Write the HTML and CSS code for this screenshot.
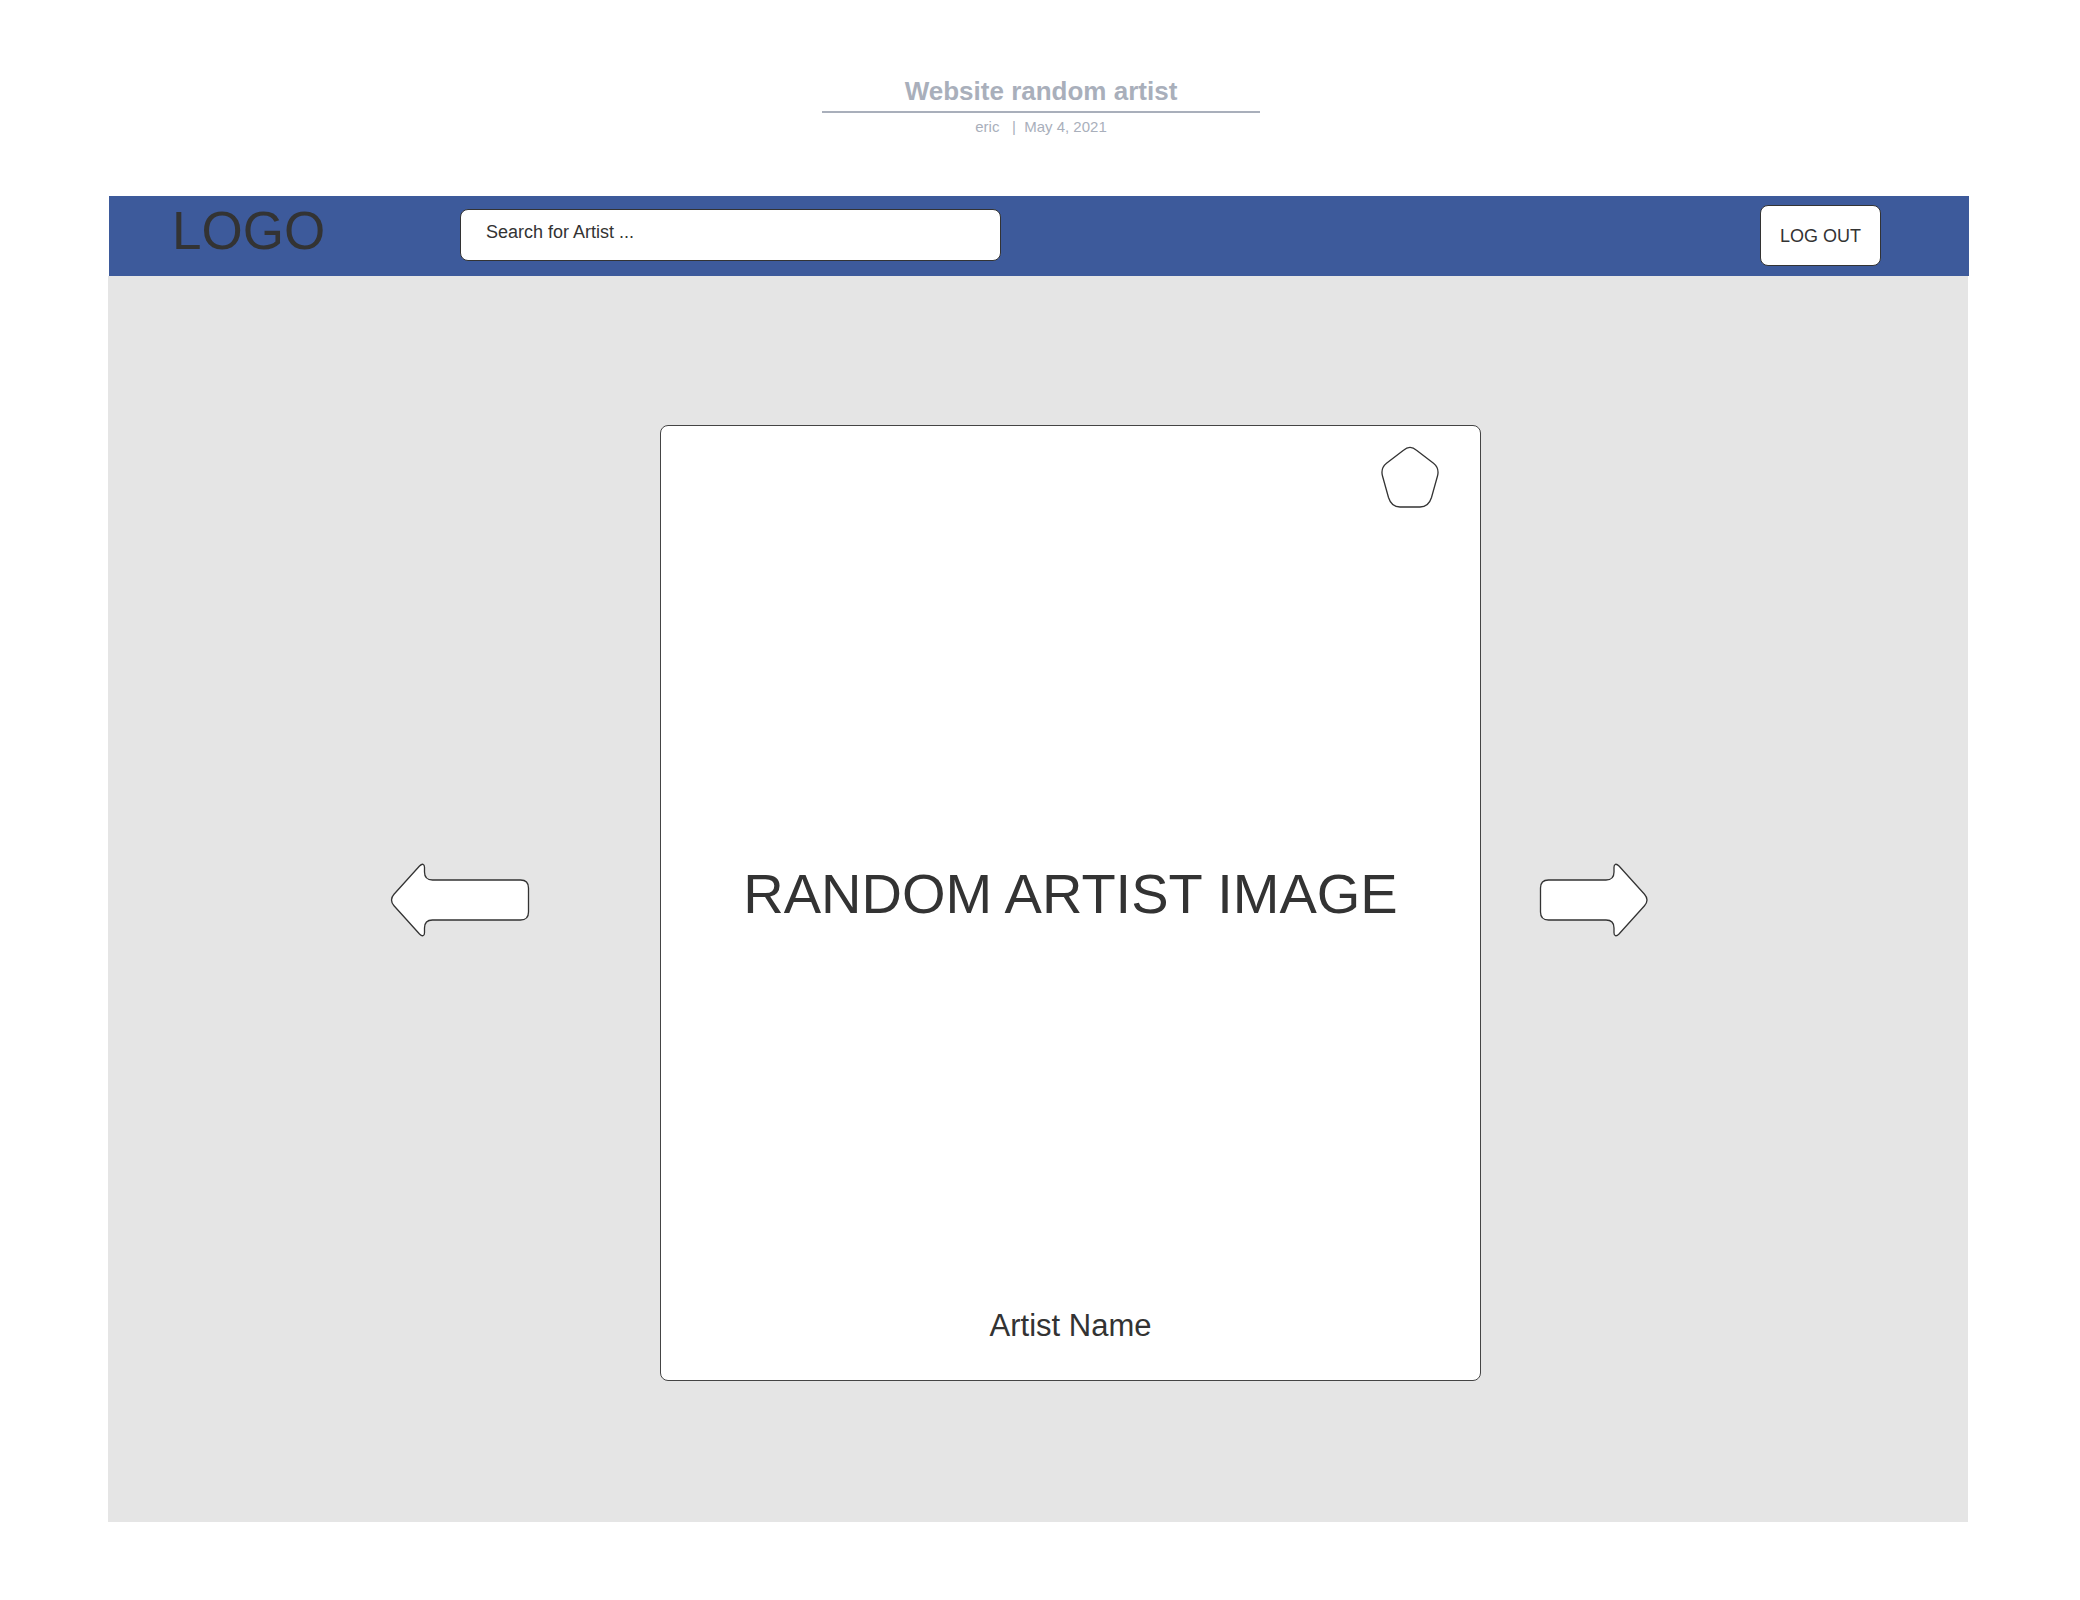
FILE: index.html
```html
<!DOCTYPE html>
<html lang="en">
<head>
  <meta charset="utf-8">
  <title>Website random artist</title>
  <link rel="stylesheet" href="styles.css">
</head>
<body>
  <header class="doc-head">
    <h1 class="doc-title">Website random artist</h1>
    <p class="doc-meta">eric &nbsp; | &nbsp;May 4, 2021</p>
  </header>

  <nav class="topbar">
    <a class="logo" href="#">LOGO</a>
    <input class="search" type="text" aria-label="Search for Artist" placeholder="Search for Artist ...">
    <button class="logout" type="button">LOG OUT</button>
  </nav>

  <main class="stage">
    <button class="arrow arrow-prev" type="button" aria-label="Previous artist">
      <svg class="shape" width="140" height="76" viewBox="0 0 140 76" stroke-width="1.3">
        <path d="M4 32.3L29.5 4C32.300 1.200 34.500 1.900 34.500 5.300V10Q34.500 18 42.500 18H130.500Q138.500 18 138.500 26V50Q138.500 58 130.500 58H42.500Q34.500 58 34.500 66V70.700C34.500 74.100 32.300 74.800 29.500 72L4 43.700Q-1 38 4 32.300Z"/>
      </svg>
    </button>

    <article class="card">
      <div class="artist-image">RANDOM ARTIST IMAGE</div>
      <h2 class="artist-name">Artist Name</h2>
      <button class="badge" type="button" aria-label="Mark artist">
        <svg class="shape" width="60" height="64" viewBox="0 0 60 64" stroke-width="1.3">
          <path d="M23.500 5.200C27.500 1.800 32.500 1.800 36.500 5.200L53.500 18.300C57.800 21.800 59 25.500 57.500 31L51.500 52.500C49.500 59 46 62 40 62H20C14 62 10.500 59 8.500 52.500L2.500 31C1 25.500 2.200 21.800 6.500 18.300Z"/>
        </svg>
      </button>
    </article>

    <button class="arrow arrow-next" type="button" aria-label="Next artist">
      <svg class="shape" width="110" height="76" viewBox="0 0 110 76" stroke-width="1.3">
        <path d="M105.500 32.300L80 4C77.200 1.200 75 1.900 75 5.300V10Q75 18 67 18H9.500Q1.500 18 1.500 26V50Q1.500 58 9.500 58H67Q75 58 75 66V70.700C75 74.100 77.200 74.800 80 72L105.500 43.700Q110.500 38 105.500 32.300Z"/>
      </svg>
    </button>
  </main>
</body>
</html>
```

FILE: styles.css
```css
* {
  box-sizing: border-box;
}

body {
  margin: 0;
  padding: 76px 0;
  background: #fff;
  color: #333;
  font-family: "Liberation Sans", Arial, sans-serif;
}

button,
input {
  font: inherit;
  color: inherit;
}

.doc-head {
  display: flex;
  flex-direction: column;
  align-items: center;
  margin-bottom: 60px;
  padding-left: 2px;
  color: #a9afbb;
  text-align: center;
}

.doc-title {
  width: 438px;
  max-width: 100%;
  margin: 0 0 5px;
  padding-bottom: 5px;
  border-bottom: 2px solid #a9afbb;
  font-size: 26px;
  line-height: 30px;
}

.doc-meta {
  margin: 0;
  font-size: 15px;
  line-height: 18px;
}

.topbar {
  display: flex;
  align-items: center;
  min-height: 80px;
  margin: 0 111px 0 109px;
  padding: 0 88px 2px 63px;
  background: #3d5a9b;
}

.logo {
  flex: 0 0 288px;
  padding-bottom: 8px;
  color: #333;
  font-size: 53px;
  line-height: 60px;
  text-decoration: none;
}

.search {
  flex: 0 1 541px;
  min-width: 0;
  height: 52px;
  padding: 0 25px 6px;
  border: 1px solid #333;
  border-radius: 8px;
  background: #fff;
  font-size: 18px;
}

.search::placeholder {
  color: #333;
  opacity: 1;
}

.logout {
  width: 121px;
  height: 61px;
  margin-left: auto;
  padding: 2px 0 0;
  border: 1px solid #333;
  border-radius: 8px;
  background: #fff;
  font-size: 18px;
}

.stage {
  display: grid;
  grid-template-columns: 552fr 821fr 487fr;
  align-items: center;
  margin: 0 112px 0 108px;
  padding: 149px 0 141px;
  background: #e5e5e5;
}

.arrow,
.badge {
  padding: 0;
  border: 0;
  background: none;
}

.arrow {
  padding-bottom: 6px;
}

.arrow-prev {
  justify-self: end;
  margin-right: 130px;
}

.arrow-next {
  justify-self: start;
  margin-left: 58px;
}

.shape {
  display: block;
  fill: #fff;
  stroke: #333;
}

.card {
  position: relative;
  display: flex;
  flex-direction: column;
  min-height: 956px;
  padding: 54px 0 36px;
  border: 1px solid #444;
  border-radius: 8px;
  background: #fff;
  text-align: center;
}

.artist-image {
  flex: 1;
  display: flex;
  align-items: center;
  justify-content: center;
  font-size: 56px;
  line-height: 64px;
}

.artist-name {
  margin: 0;
  font-size: 31px;
  font-weight: 400;
  line-height: 36px;
}

.badge {
  position: absolute;
  top: 19px;
  right: 40px;
}
```
